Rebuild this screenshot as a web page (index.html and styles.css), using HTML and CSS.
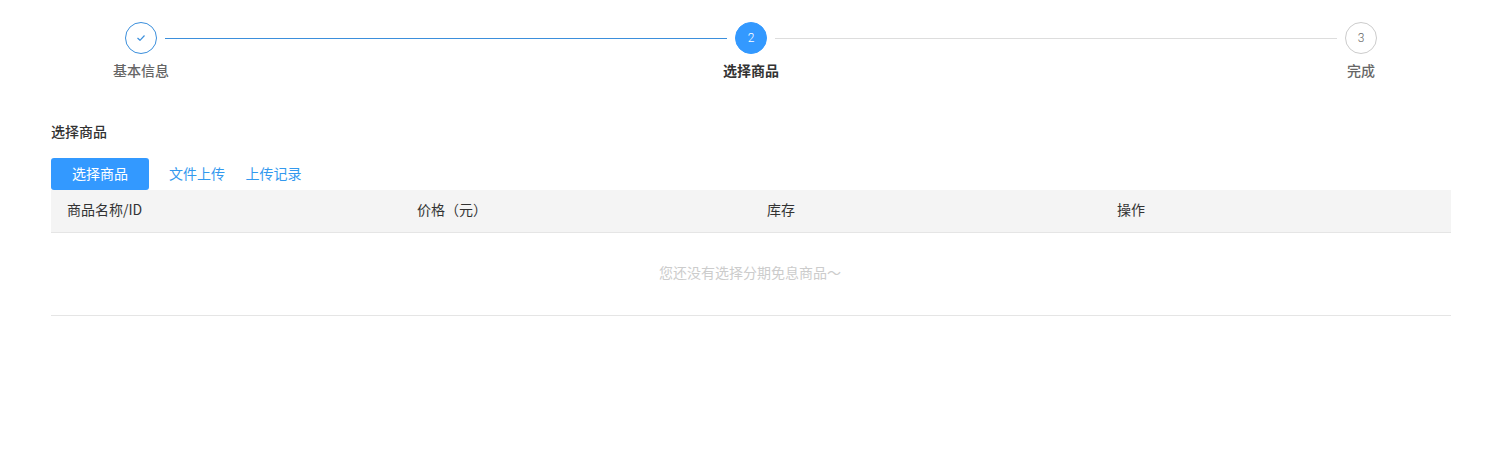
FILE: index.html
```html
<!DOCTYPE html>
<html lang="zh-CN">
<head>
  <meta charset="UTF-8">
  <title>选择商品</title>
  <link rel="stylesheet" href="styles.css">
</head>
<body>
  <div class="steps">
    <div class="step done">
      <div class="step-circle">
        <svg width="8" height="6" viewBox="0 0 8 6"><path d="M0.5 3 L3 5.3 L7.5 0.5" fill="none" stroke="#3b8fdc" stroke-width="1.2"/></svg>
      </div>
      <div class="step-title">基本信息</div>
    </div>
    <div class="step-line active"></div>
    <div class="step current">
      <div class="step-circle">2</div>
      <div class="step-title">选择商品</div>
    </div>
    <div class="step-line"></div>
    <div class="step">
      <div class="step-circle">3</div>
      <div class="step-title">完成</div>
    </div>
  </div>

  <div class="content">
    <h2 class="section-title">选择商品</h2>
    <div class="toolbar">
      <button class="btn">选择商品</button>
      <a class="link" href="#">文件上传</a>
      <a class="link" href="#">上传记录</a>
    </div>
    <div class="table-head">
      <div class="cell">商品名称/ID</div>
      <div class="cell">价格（元）</div>
      <div class="cell">库存</div>
      <div class="cell">操作</div>
    </div>
    <div class="table-empty">您还没有选择分期免息商品～</div>
  </div>
</body>
</html>
```

FILE: styles.css
```css
* {
  box-sizing: border-box;
}
body {
  margin: 0;
  background: #fff;
  color: #333;
  font-family: "Noto Sans CJK SC", "Noto Sans", sans-serif;
  font-size: 14px;
}
.steps {
  display: flex;
  align-items: flex-start;
  padding: 22px 103px 0 113px;
}
.step {
  width: 56px;
  display: flex;
  flex-direction: column;
  align-items: center;
}
.step-circle {
  width: 32px;
  height: 32px;
  border: 1px solid #ccc;
  border-radius: 50%;
  display: flex;
  align-items: center;
  justify-content: center;
  padding-bottom: 1px;
  font-family: "Roboto", sans-serif;
  font-size: 12px;
  font-weight: 300;
  color: #666;
}
.step.done .step-circle {
  border-color: #3b8fdc;
}
.step.current .step-circle {
  background: #3399ff;
  border-color: #3399ff;
  color: #fff;
}
.step-title {
  margin-top: 6px;
  line-height: 20px;
  font-weight: 500;
  color: #666;
  white-space: nowrap;
}
.step.current .step-title {
  color: #333;
  font-weight: 700;
}
.step-line {
  flex: 1;
  height: 1px;
  margin: 16px -4px 0;
  background: #ddd;
}
.step-line.active {
  background: #3b8fdc;
}
.content {
  padding: 0 41px 0 51px;
}
.section-title {
  margin: 41px 0 0;
  font-size: 14px;
  line-height: 20px;
  font-weight: 500;
}
.toolbar {
  display: flex;
  align-items: center;
  gap: 20px;
  margin-top: 17px;
}
.btn {
  width: 98px;
  height: 32px;
  padding: 0 0 2px;
  border: none;
  border-radius: 3px;
  background: #3399ff;
  color: #fff;
  font: inherit;
}
.link {
  margin-bottom: 2px;
  padding-right: 0.4px;
  color: #3399ee;
  text-decoration: none;
}
.table-head {
  display: grid;
  grid-template-columns: repeat(4, 350px);
  height: 43px;
  padding-bottom: 5px;
  align-items: center;
  background: #f4f4f4;
  border-bottom: 1px solid #e5e5e5;
}
.cell {
  padding-left: 16px;
}
.table-empty {
  height: 83px;
  padding: 0 2px 4px 0;
  display: flex;
  align-items: center;
  justify-content: center;
  color: #ccc;
  border-bottom: 1px solid #e5e5e5;
}
```
